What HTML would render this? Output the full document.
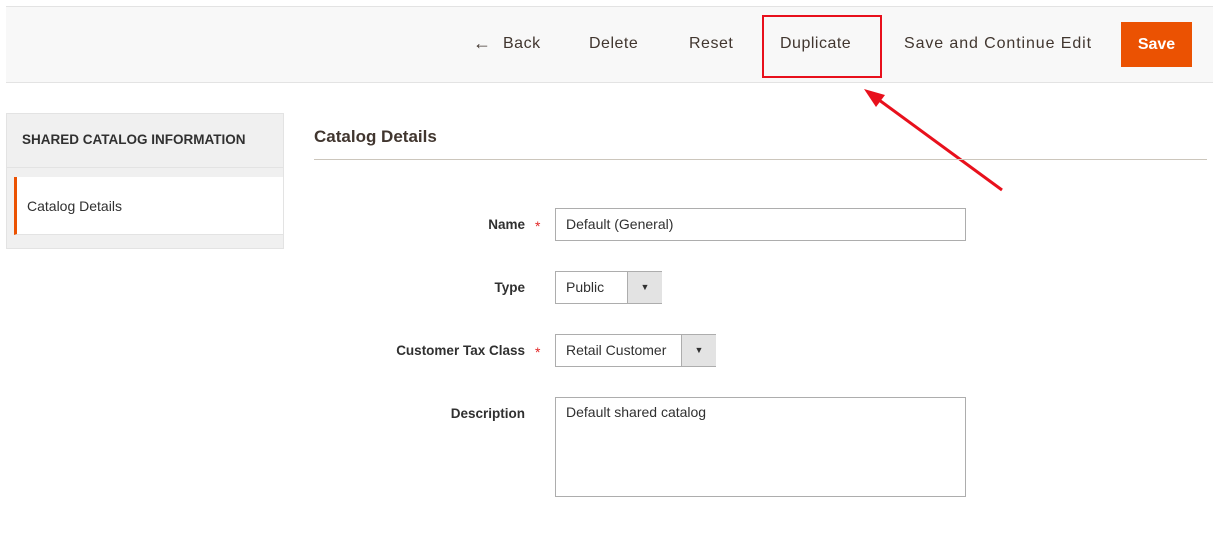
<!DOCTYPE html>
<html><head><meta charset="utf-8"><style>
body{margin:0;width:1213px;height:537px;background:#fff;font-family:"Liberation Sans",sans-serif;color:#303030;position:relative;overflow:hidden}
.a{position:absolute}
.bar{left:6px;top:6px;width:1207px;height:75px;background:#f8f8f8;border-top:1px solid #e3e3e3;border-bottom:1px solid #e3e3e3}
.btn{font-size:16px;color:#41362f;top:35px;letter-spacing:.5px}
.save{left:1121px;top:22px;width:71px;height:45px;background:#eb5202;color:#fff;font-weight:bold;font-size:16px;line-height:45px;text-align:center}
.side{left:6px;top:113px;width:276px;height:134px;background:#f0f0f0;border:1px solid #e3e3e3}
.lbl{font-size:13.5px;text-align:right;width:200px;left:325px;font-weight:bold;color:#303030}
.inp{border:1px solid #adadad;background:#fff;font-size:14px;box-sizing:border-box;padding-left:10px;color:#303030}
.star{color:#e22626;font-size:14px}
</style></head><body>
<div class="a bar"></div>
<div class="a btn" style="left:473px;font-size:18px;top:33px">&#8592;</div>
<div class="a btn" style="left:503px">Back</div>
<div class="a btn" style="left:589px">Delete</div>
<div class="a btn" style="left:689px">Reset</div>
<div class="a btn" style="left:780px">Duplicate</div>
<div class="a btn" style="left:904px;letter-spacing:.9px">Save and Continue Edit</div>
<div class="a save">Save</div>
<div class="a" style="left:762px;top:15px;width:116px;height:59px;border:2px solid #e8101c"></div>
<svg class="a" style="left:0;top:0" width="1213" height="537"><line x1="1002" y1="190" x2="875" y2="97" stroke="#e8101c" stroke-width="3"/><polygon points="864,89 885,95 876,107" fill="#e8101c"/></svg>
<div class="a side"></div>
<div class="a" style="left:22px;top:132px;font-size:13.5px;font-weight:bold">SHARED CATALOG INFORMATION</div>
<div class="a" style="left:7px;top:167px;width:276px;height:1px;background:#e3e3e3"></div>
<div class="a" style="left:14px;top:177px;width:269px;height:58px;background:#fff;border-left:3px solid #eb5202;border-bottom:1px solid #e3e3e3;box-sizing:border-box"></div>
<div class="a" style="left:27px;top:198px;font-size:14px">Catalog Details</div>
<div class="a" style="left:314px;top:127px;font-size:17px;font-weight:bold;color:#41362f">Catalog Details</div>
<div class="a" style="left:314px;top:159px;width:893px;height:1px;background:#ccc6bc"></div>
<div class="a lbl" style="top:217px">Name</div><div class="a star" style="left:535px;top:218px">*</div>
<div class="a inp" style="left:555px;top:208px;width:411px;height:33px;line-height:31px">Default (General)</div>
<div class="a lbl" style="top:280px">Type</div>
<div class="a inp" style="left:555px;top:271px;width:107px;height:33px;line-height:31px">Public</div>
<div class="a" style="left:627px;top:272px;width:34px;height:31px;background:#e3e3e3;border-left:1px solid #adadad;font-size:9px;text-align:center;line-height:31px">&#9660;</div>
<div class="a lbl" style="top:343px">Customer Tax Class</div><div class="a star" style="left:535px;top:344px">*</div>
<div class="a inp" style="left:555px;top:334px;width:161px;height:33px;line-height:31px">Retail Customer</div>
<div class="a" style="left:681px;top:335px;width:34px;height:31px;background:#e3e3e3;border-left:1px solid #adadad;font-size:9px;text-align:center;line-height:31px">&#9660;</div>
<div class="a lbl" style="top:406px">Description</div>
<div class="a inp" style="left:555px;top:397px;width:411px;height:100px;padding-top:6px">Default shared catalog</div>
</body></html>
